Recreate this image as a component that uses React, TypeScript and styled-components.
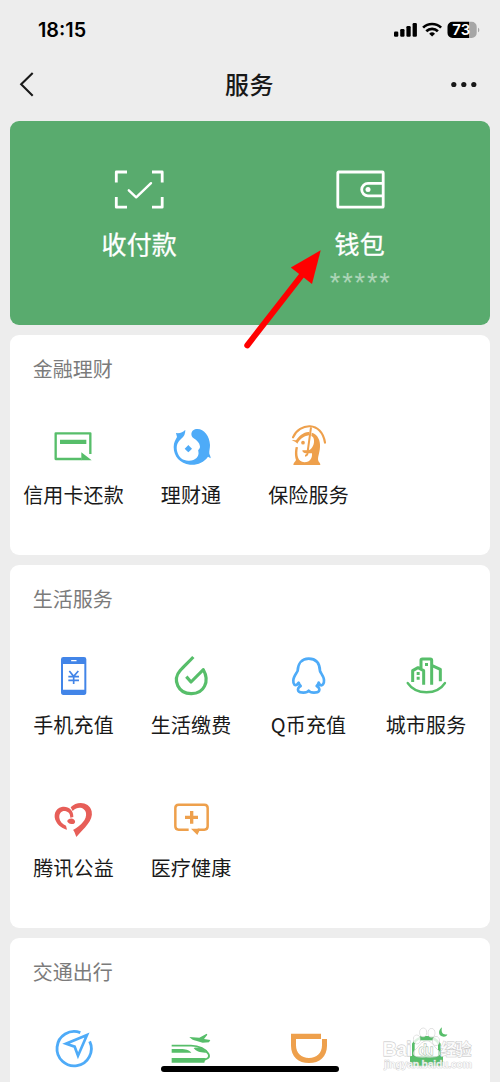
import React from 'react';
import styled, { createGlobalStyle } from 'styled-components';

const GREEN = '#57be6a';
const BLUE = '#4eabf8';
const ORANGE = '#eea04c';
const RED = '#e75e58';
const PHONE_BLUE = '#4285e8';

const GlobalStyle = createGlobalStyle`
  * { box-sizing: border-box; }
  body {
    margin: 0;
    background: #ededed;
    font-family: "Noto Sans CJK SC", sans-serif;
    color: #191919;
  }
`;

const Screen = styled.div`
  position: relative;
  width: 500px;
  height: 1082px;
  overflow: hidden;
  background: #ededed;
`;

const StatusBar = styled.header`
  display: flex;
  align-items: center;
  justify-content: space-between;
  height: 60px;
  padding: 0 20px 0 38px;
`;

const Time = styled.span`
  font: 600 19.8px/24px Inter, sans-serif;
  color: #000;
`;

const NavBar = styled.nav`
  display: flex;
  align-items: center;
  justify-content: space-between;
  height: 50px;
  padding: 0 22px 0 18px;
`;

const Title = styled.h1`
  margin: 0 0 2px 3px;
  font-size: 24px;
  line-height: 36px;
  font-weight: 500;
  letter-spacing: 0.5px;
`;

const Content = styled.main`
  display: flex;
  flex-direction: column;
  gap: 10px;
  padding: 11px 10px 0;
`;

const PayCard = styled.section`
  display: grid;
  grid-template-columns: 1fr 1fr;
  height: 204px;
  padding: 44px 20px 0 19px;
  border-radius: 9px;
  background: #59ab6e;
  color: #fff;
`;

const PayItem = styled.div`
  display: flex;
  flex-direction: column;
  align-items: center;
`;

const PayLabel = styled.span`
  margin-top: 10px;
  font-size: 25px;
  line-height: 36px;
  font-weight: 400;
  letter-spacing: 0.2px;
  -webkit-text-stroke: 0.3px #fff;
`;

const Balance = styled.span`
  margin: 7px -2px 0 0;
  font: 400 27px/30px "Liberation Sans", sans-serif;
  letter-spacing: 1.9px;
  opacity: 0.5;
`;

const Card = styled.section`
  padding: 19px 5.25px 46px 4.75px;
  border-radius: 9px;
  background: #fff;
`;

const CardTitle = styled.h2`
  margin: 0 0 38px 18px;
  font-size: 20px;
  line-height: 30px;
  font-weight: 400;
  color: #7b7b7b;
`;

const Grid = styled.div`
  display: grid;
  grid-template-columns: repeat(4, 1fr);
  row-gap: 56px;
`;

const Service = styled.div`
  display: flex;
  flex-direction: column;
  align-items: center;
  gap: 11px;
`;

const ServiceIcon = styled.svg`
  width: 48px;
  height: 48px;
`;

const ServiceLabel = styled.span`
  height: 28px;
  font-size: 20px;
  line-height: 28px;
  letter-spacing: 0.15px;
  white-space: nowrap;
`;

const Arrow = styled.svg`
  position: absolute;
  left: 240px;
  top: 245px;
`;

const Watermark = styled.svg`
  position: absolute;
  left: 375px;
  top: 1020px;
`;

const HomeIndicator = styled.div`
  position: absolute;
  left: 161px;
  top: 1066px;
  width: 178px;
  height: 6px;
  border-radius: 3px;
  background: #000;
`;

const StatusIcons = () => (
  <svg width="86" height="20" viewBox="0 0 86 20">
    <rect x="0" y="11.6" width="4.3" height="5.2" rx="1.2" />
    <rect x="6.2" y="9" width="4.3" height="7.8" rx="1.2" />
    <rect x="12.4" y="6" width="4.3" height="10.8" rx="1.2" />
    <rect x="18.6" y="3" width="4.3" height="13.8" rx="1.2" />
    <g fill="none" stroke="#000" strokeWidth="2.7">
      <path d="M29.1 7.6a13 13 0 0 1 18 0" />
      <path d="M32.3 11.2a8.3 8.3 0 0 1 11.6 0" />
    </g>
    <path d="M38.1 16.6l-2.9-2.9a4.2 4.2 0 0 1 5.8 0z" />
    <path d="M58.5 1.8H75V18H58.5a5 5 0 0 1-5-5V6.8a5 5 0 0 1 5-5z" />
    <path fill="#a6a6a6" d="M75 1.8h2.7a5 5 0 0 1 5 5V13a5 5 0 0 1-5 5H75zM84 7.7c1.8.7 1.8 3.9 0 4.6z" />
    <text x="67.3" y="15.3" textAnchor="middle" fill="#fff" fontFamily="Inter, sans-serif" fontSize="15" fontWeight="600">73</text>
  </svg>
);

const services: Record<string, { viewBox: string; art: React.ReactNode }> = {
  card: {
    viewBox: '120 36 144 144',
    art: (
      <>
        <path fill="none" stroke={GREEN} strokeWidth="7" strokeLinejoin="round" d="M215 147H137V70H241V132" />
        <path fill={GREEN} d="M150 89.5H229V102H150zM214 127L245 150.5H214z" />
      </>
    ),
  },
  fish: {
    viewBox: '471 36 144 144',
    art: (
      <>
        <path
          fill={BLUE}
          d="M498 69C510 71 519 66 526 59C526 71 523 79 513 87C500 98 498 112 502 126C507 143 519 152 535 152C555 153 569 141 565 124C563 119 570 117 570 110C569 98 560 91 551 85C540 77 543 62 555 58C578 52 599 75 600 105C600 115 597 124 598 131C600 136 602 140 602 145L594 140C581 158 561 166 540 164C510 161 491 139 491 111C491 97 497 89 501 81Z"
        />
        <path fill={BLUE} d="M535 105l5 5 6 6-6 6-5 5-5-5-6-6 6-6z" />
      </>
    ),
  },
  insurance: {
    viewBox: '135 36 144 144',
    art: (
      <>
        <path fill="none" stroke={ORANGE} strokeWidth="6.5" strokeLinecap="round" d="M159 82C178 38 245 32 255 98" />
        <path fill={ORANGE} d="M155 90L168 91C176 79 192 64 208 66L207 76C190 78 178 90 172 101C170 97 162 94 155 90Z" />
        <path
          fill={ORANGE}
          d="M215 68C234 73 241 92 240 110C239 130 232 142 235 152C236 156 241 158 241 165H160C160 158 166 155 168 150C163 135 165 120 167 111L174 112C169 135 173 156 193 157C212 157 217 143 216 130H198C191 129 187 126 187 121H204C213 120 223 106 222 92C222 86 220 80 214 78Z"
        />
        <path fill="none" stroke={ORANGE} strokeWidth="6" d="M213 52L202 132Q201 137 195 137" />
        <circle cx="189" cy="98" r="5.5" fill={ORANGE} />
      </>
    ),
  },
  phone: {
    viewBox: '120 36 144 144',
    art: (
      <>
        <path fill={PHONE_BLUE} fillRule="evenodd" d="M160 51H222Q229 51 229 58V157Q229 165 222 165H160Q153 165 153 157V58Q153 51 160 51zM159 72V149H223V72z" />
        <rect x="183" y="60" width="17" height="4" rx="2" fill="#fff" />
        <path fill="none" stroke={PHONE_BLUE} strokeWidth="5" d="M178 93L191 109L205 93M191 108V132M175 110H207M175 121H207" />
      </>
    ),
  },
  utility: {
    viewBox: '471 36 144 144',
    art: (
      <path fill="none" stroke={GREEN} strokeWidth="9.5" strokeLinejoin="round" d="M550 51C536 66 521 80 511 91C485 121 506 161 543 161C582 162 600 124 580 89L543 126L529 110" />
    ),
  },
  qcoin: {
    viewBox: '105 36 144 144',
    art: (
      <path
        fill="none"
        stroke={BLUE}
        strokeWidth="8"
        strokeLinejoin="round"
        d="M146 128C147 132 149 135 152 138C145 142 142 148 145 153C149 159 171 160 176 152C181 160 203 159 207 153C210 148 207 142 200 138C203 135 205 132 206 128L210 135C217 138 223 132 222 120C222 110 212 99 210 93C209 68 196 56 176 56C155 56 144 71 143 92C140 99 130 110 130 121C129 133 135 138 141 134Z"
      />
    ),
  },
  city: {
    viewBox: '456 36 144 144',
    art: (
      <>
        <path
          fill="none"
          stroke={GREEN}
          strokeWidth="9"
          strokeLinejoin="round"
          d="M488 126V92L504 83L521 92V134M513 86V61Q513 57 517 57H541Q545 57 545 61V134M545 76L571 88V124"
        />
        <path fill="none" stroke={GREEN} strokeWidth="7" strokeLinecap="round" d="M473 129C498 166 561 166 585 129" />
        <path fill={GREEN} d="M525 69h9v9h-9zM500 96h9v9h-9zM500 110h9v9h-9z" />
      </>
    ),
  },
  charity: {
    viewBox: '120 30 144 144',
    art: (
      <>
        <path fill={RED} d="M182 67C201 47 238 50 245 79C251 107 222 130 199 156C195 145 192 136 189 135C214 121 231 103 228 84C225 68 204 62 188 78Z" />
        <path fill={RED} d="M190 96C191 74 173 62 155 66C135 70 129 92 138 109C145 123 158 131 171 134L168 122C157 117 149 109 148 98C147 84 156 76 168 79C178 82 180 87 181 98Z" />
        <path fill={RED} d="M174 104C182 98 192 99 195 108C198 117 184 121 175 113C171 111 171 106 174 104Z" />
      </>
    ),
  },
  medical: {
    viewBox: '471 30 144 144',
    art: (
      <>
        <path fill="none" stroke={ORANGE} strokeWidth="7.5" d="M536 134H506Q496 134 496 124V69Q496 59 506 59H583Q593 59 593 69V124Q593 134 583 134H563" />
        <path fill={ORANGE} d="M543 131H568V138L562 150zM540 78H550V92H564V102H550V116H540V102H525V92H540z" />
      </>
    ),
  },
  travel: {
    viewBox: '151 75 144 144',
    art: (
      <>
        <path fill="none" stroke={BLUE} strokeWidth="8.5" d="M242 98A51.5 51.5 0 1 0 270 124" />
        <path fill="none" stroke={BLUE} strokeWidth="8" d="M262 105L199 131L225 140L235 167Z" />
      </>
    ),
  },
  train: {
    viewBox: '501 75 144 144',
    art: (
      <>
        <path fill="none" stroke={GREEN} strokeWidth="5.5" d="M515 137H573C598 137 618 149 625 161C631 172 623 178 611 178" />
        <path fill={GREEN} d="M515 147H548C560 148 571 153 574 158H515zM515 174H612Q620 175 618 180Q614 181 613 188H515zM581 144C596 140 611 145 619 158C602 159 587 153 581 144zM568 111L598 113L620 101L622 104L612 117L631 120L627 127L608 128L588 122C580 121 573 117 568 111z" />
      </>
    ),
  },
  ride: {
    viewBox: '105 75 144 144',
    art: (
      <path fill={ORANGE} fillRule="evenodd" d="M123 101H213V117H231V137C231 169 209 189 177 189C145 189 123 169 123 137zM138 117V136C138 159 154 174 177 174C200 174 216 159 216 136V117z" />
    ),
  },
  hotel: {
    viewBox: '456 75 144 144',
    art: (
      <>
        <path fill={GREEN} d="M576 82C563 91 564 110 581 110C588 110 591 107 592 103C580 106 572 99 576 82zM480 168H579V197H480z" />
        <path fill="none" stroke={GREEN} strokeWidth="8" d="M490 170V132C502 105 554 105 568 132V170" />
        <path fill={GREEN} d="M509 109H550V121H509z" />
      </>
    ),
  },
};

const sections = [
  {
    title: '金融理财',
    items: [
      ['card', '信用卡还款'],
      ['fish', '理财通'],
      ['insurance', '保险服务'],
    ],
  },
  {
    title: '生活服务',
    items: [
      ['phone', '手机充值'],
      ['utility', '生活缴费'],
      ['qcoin', 'Q币充值'],
      ['city', '城市服务'],
      ['charity', '腾讯公益'],
      ['medical', '医疗健康'],
    ],
  },
  {
    title: '交通出行',
    items: [
      ['travel', ''],
      ['train', ''],
      ['ride', ''],
      ['hotel', ''],
    ],
  },
];

export default function App() {
  return (
    <Screen>
      <GlobalStyle />
      <StatusBar>
        <Time>18:15</Time>
        <StatusIcons />
      </StatusBar>
      <NavBar>
        <svg width="28" height="28" viewBox="0 0 28 28" fill="none" stroke="#191919" strokeWidth="2.1">
          <path d="M14.7 2L3.2 13.3L14.7 24.7" />
        </svg>
        <Title>服务</Title>
        <svg width="28" height="8" viewBox="0 0 28 8" fill="#191919">
          <circle cx="3.8" cy="3.5" r="2.6" />
          <circle cx="13.8" cy="3.5" r="2.6" />
          <circle cx="23.8" cy="3.5" r="2.6" />
        </svg>
      </NavBar>
      <Content>
        <PayCard>
          <PayItem>
            <svg width="50" height="50" viewBox="0 0 50 50" fill="none" stroke="#fff" strokeWidth="2.8">
              <path strokeLinejoin="round" d="M13 7H2.3V17.5M38 7H48.2V17.5M2.3 32V42.2H13M48.2 32V42.2H38" />
              <path strokeWidth="2.4" strokeLinecap="round" strokeLinejoin="round" d="M14.8 25.3L22.2 32.3L37 18.2" />
            </svg>
            <PayLabel>收付款</PayLabel>
          </PayItem>
          <PayItem>
            <svg width="50" height="50" viewBox="0 0 50 50" fill="none" stroke="#fff" strokeWidth="2.8">
              <rect x="2.8" y="7" width="45.4" height="35.2" rx="0.8" />
              <path d="M47.5 18.3H33a6.3 6.3 0 0 0 0 12.6H47.5" />
              <circle cx="33" cy="24.6" r="2.5" fill="#fff" stroke="none" />
            </svg>
            <PayLabel>钱包</PayLabel>
            <Balance>*****</Balance>
          </PayItem>
        </PayCard>
        {sections.map((section) => (
          <Card key={section.title}>
            <CardTitle>{section.title}</CardTitle>
            <Grid>
              {section.items.map(([icon, label]) => (
                <Service key={icon}>
                  <ServiceIcon viewBox={services[icon].viewBox}>{services[icon].art}</ServiceIcon>
                  <ServiceLabel>{label}</ServiceLabel>
                </Service>
              ))}
            </Grid>
          </Card>
        ))}
      </Content>
      <Arrow width="90" height="110" viewBox="240 245 90 110">
        <path d="M247.3 345.3L302 275" stroke="#f00" strokeWidth="6" strokeLinecap="round" />
        <path d="M320.7 250.3L290.8 267.5L312 284Z" fill="#f00" />
      </Arrow>
      <Watermark width="110" height="60" viewBox="375 1020 110 60">
        <g fill="#fff" fillOpacity="0.8" stroke="#c4c4c4" strokeWidth="0.8" paintOrder="stroke">
          <ellipse cx="423.2" cy="1032.5" rx="3.3" ry="4.3" />
          <ellipse cx="431.5" cy="1033" rx="3.3" ry="4.3" />
          <ellipse cx="416.8" cy="1039.5" rx="3.3" ry="4.3" />
          <ellipse cx="436" cy="1041" rx="3.3" ry="4.3" />
          <path fillOpacity="0.6" d="M427 1041C421 1041 419 1047 415 1050C411 1055 415 1058 426 1057C438 1058 443 1055 438 1050C434 1047 432 1041 427 1041Z" />
          <g fontFamily="Liberation Sans, sans-serif" fontWeight="700">
            <text x="382.5" y="1056" fontSize="20" textLength="29">Bai</text>
            <text x="418.5" y="1054.5" fontSize="14" textLength="15" stroke="#9fb8a4">du</text>
            <text x="440.5" y="1055" fontSize="16" fontFamily="Noto Sans CJK SC, sans-serif" textLength="31">经验</text>
            <text x="384" y="1068" fontSize="10.5" strokeWidth="0.6" textLength="88">jingyan.baidu.com</text>
          </g>
        </g>
      </Watermark>
      <HomeIndicator />
    </Screen>
  );
}
